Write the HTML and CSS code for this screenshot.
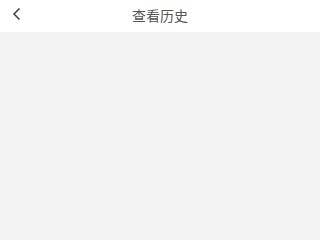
FILE: index.html
```html
<!DOCTYPE html>
<html lang="zh-CN">
<head>
<meta charset="utf-8">
<title>查看历史</title>
<link rel="stylesheet" href="styles.css">
</head>
<body>
<div class="page">
  <header class="navbar">
    <span class="back" aria-label="返回">
      <svg width="10" height="14" viewBox="0 0 10 14"><path d="M7.5 1.5 L2 7 L7.5 12.5" fill="none" stroke="#444" stroke-width="1.6"/></svg>
    </span>
    <h1 class="title">查看历史</h1>
  </header>
  <main class="content"></main>
</div>
</body>
</html>
```
FILE: styles.css
```css
html, body {
  margin: 0;
  padding: 0;
  height: 100%;
}
body {
  font-family: "Noto Sans CJK SC", "Noto Sans", sans-serif;
  background: #f3f3f3;
}
.page {
  display: flex;
  flex-direction: column;
  height: 100%;
}
.navbar {
  position: relative;
  height: 32px;
  background: #fff;
  display: flex;
  align-items: center;
  justify-content: center;
}
.back {
  position: absolute;
  left: 12px;
  top: 7px;
  display: flex;
}
.title {
  margin: 0;
  font-size: 14px;
  font-weight: normal;
  color: #555;
  line-height: 1;
  margin-top: -2px;
  padding-left: 0;
}
.content {
  flex: 1;
  background: #f3f3f3;
}
```
